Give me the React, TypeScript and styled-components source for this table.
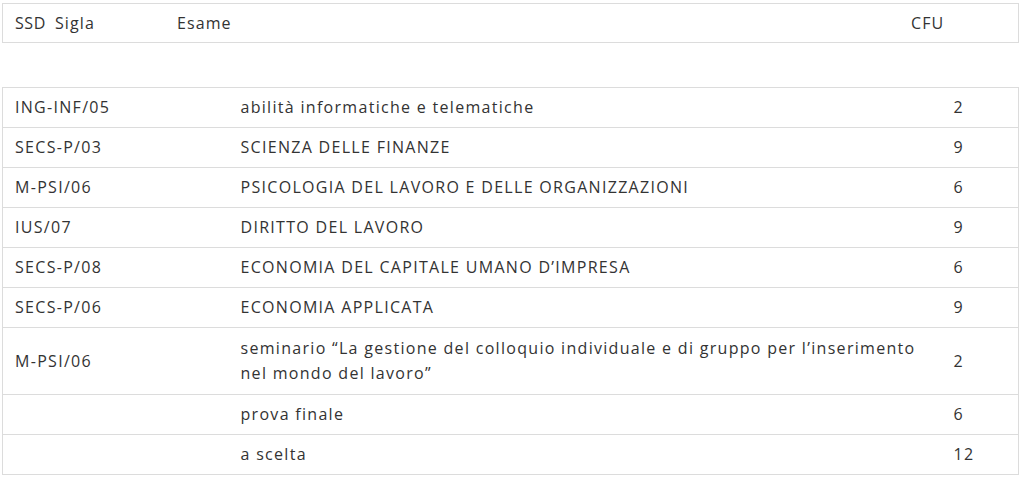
import styled, { createGlobalStyle } from 'styled-components';

const GlobalStyle = createGlobalStyle`
  html, body {
    margin: 0;
    padding: 0;
    background: #fff;
  }
  body {
    font-family: 'Open Sans', 'Liberation Sans', sans-serif;
    color: #333;
  }
`;

const Page = styled.div`
  padding: 3px 5px 0 2px;
`;

const HeaderBar = styled.div`
  display: grid;
  grid-template-columns: 40px 122px 734px 1fr;
  height: 40px;
  align-items: center;
  border: 1px solid #dcdcdc;
  box-sizing: border-box;
  font-size: 16px;
  letter-spacing: 1.1px;

  span {
    padding-left: 12px;
    white-space: nowrap;
  }

  span:first-child {
    letter-spacing: 0.6px;
  }
`;

const ExamTable = styled.table`
  width: 100%;
  margin-top: 44px;
  border-collapse: collapse;
  table-layout: fixed;
  font-size: 16px;
  letter-spacing: 1.3px;
  line-height: 25px;
  border: 1px solid #dcdcdc;
`;

const Row = styled.tr`
  border-bottom: 1px solid #dcdcdc;
`;

const Cell = styled.td<{ $tall?: boolean }>`
  padding: ${(p) => (p.$tall ? '8px 12px' : '7px 12px')};
  vertical-align: middle;
  text-align: left;
  white-space: nowrap;
`;

interface Exam {
  ssd: string;
  name: React.ReactNode;
  cfu: number;
  tall?: boolean;
}

const exams: Exam[] = [
  { ssd: 'ING-INF/05', name: 'abilità informatiche e telematiche', cfu: 2 },
  { ssd: 'SECS-P/03', name: 'SCIENZA DELLE FINANZE', cfu: 9 },
  { ssd: 'M-PSI/06', name: 'PSICOLOGIA DEL LAVORO E DELLE ORGANIZZAZIONI', cfu: 6 },
  { ssd: 'IUS/07', name: 'DIRITTO DEL LAVORO', cfu: 9 },
  { ssd: 'SECS-P/08', name: 'ECONOMIA DEL CAPITALE UMANO D’IMPRESA', cfu: 6 },
  { ssd: 'SECS-P/06', name: 'ECONOMIA APPLICATA', cfu: 9 },
  {
    ssd: 'M-PSI/06',
    name: (
      <>
        seminario “La gestione del colloquio individuale e di gruppo per l’inserimento
        <br />
        nel mondo del lavoro”
      </>
    ),
    cfu: 2,
    tall: true,
  },
  { ssd: '', name: 'prova finale', cfu: 6 },
  { ssd: '', name: 'a scelta', cfu: 12 },
];

export default function App() {
  return (
    <Page>
      <GlobalStyle />
      <HeaderBar>
        <span>SSD</span>
        <span>Sigla</span>
        <span>Esame</span>
        <span>CFU</span>
      </HeaderBar>
      <ExamTable>
        <colgroup>
          <col style={{ width: 226 }} />
          <col />
          <col style={{ width: 77 }} />
        </colgroup>
        <tbody>
          {exams.map((exam, i) => (
            <Row key={i}>
              <Cell $tall={exam.tall}>{exam.ssd}</Cell>
              <Cell $tall={exam.tall}>{exam.name}</Cell>
              <Cell $tall={exam.tall}>{exam.cfu}</Cell>
            </Row>
          ))}
        </tbody>
      </ExamTable>
    </Page>
  );
}
